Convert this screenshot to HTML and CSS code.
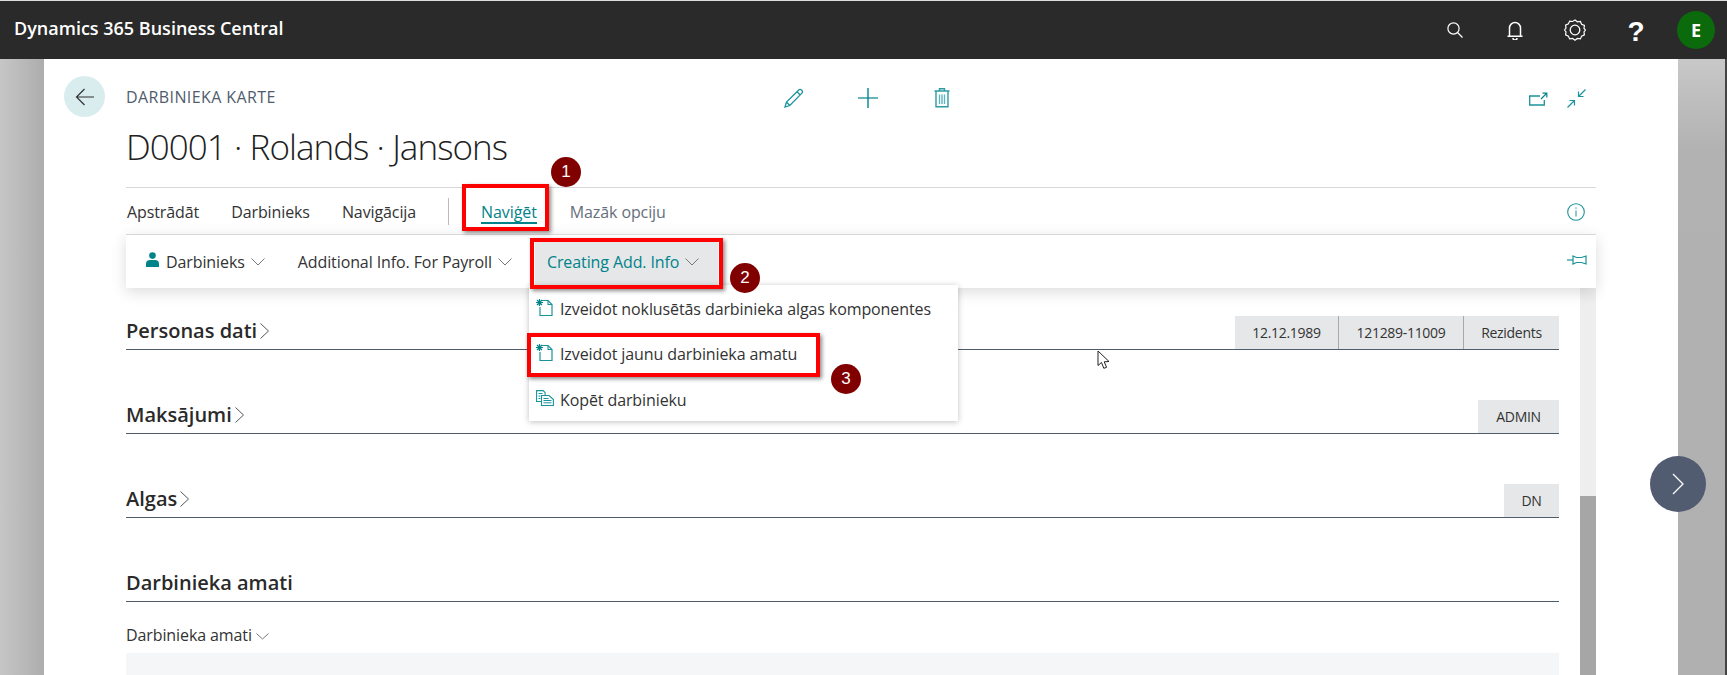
FILE: index.html
```html
<!DOCTYPE html>
<html lang="lv">
<head>
<meta charset="utf-8">
<title>Darbinieka karte</title>
<link rel="stylesheet" href="styles.css">
</head>
<body>
<div class="app">
  <header class="topbar">
    <div class="brand">Dynamics 365 Business Central</div>
    <div class="top-icons">
      <svg class="ti ti-search" viewBox="0 0 16 16" width="16" height="16"><circle cx="6.500" cy="6.500" r="5.600" fill="none" stroke="#fff" stroke-width="1.200"/><path d="M10.500 10.500l5 5" stroke="#fff" stroke-width="1.200"/></svg>
      <svg class="ti ti-bell" viewBox="0 0 16 19" width="16" height="19"><path d="M2.500 14.500V7a5.500 5.500 0 0 1 11 0v7.500M.5 15.200h15M6 17a2 2 0 0 0 4 0" fill="none" stroke="#fff" stroke-width="1.500"/></svg>
      <svg class="ti ti-gear" viewBox="0 0 22 22" width="22" height="22"><path d="M11 1l2.400 1.800 3-.4 1.200 2.800 2.800 1.200-.4 3L21.500 11l-1.500 1.900.4 3-2.800 1.200-1.200 2.800-3-.4L11 21.200l-2.400-1.700-3 .4-1.200-2.800-2.800-1.200.4-3L.5 11l1.500-1.900-.4-3 2.800-1.200 1.200-2.800 3 .4z" fill="none" stroke="#fff" stroke-width="1.200"/><circle cx="11" cy="11" r="4.800" fill="none" stroke="#fff" stroke-width="1.300"/></svg>
      <span class="ti ti-help">?</span>
      <span class="avatar">E</span>
    </div>
  </header>

  <div class="stage">
    <div class="gutter-left"></div>
    <main class="page">
      <div class="page-head">
        <button class="back" aria-label="Atpakaļ">
          <svg viewBox="0 0 20 18" width="20" height="18"><path d="M19 9H1.500M9.500 1L1.500 9l8 8" fill="none" stroke="#333" stroke-width="1.200"/></svg>
        </button>
        <div class="head-text">
          <div class="caption">DARBINIEKA KARTE</div>
          <h1 class="title">D0001 · Rolands · Jansons</h1>
        </div>
        <div class="tools">
          <svg viewBox="0 0 20 20" width="20" height="20"><path d="M1 19l1.500-5L14.500 2.200a2 2 0 0 1 3.200 3.200L5.800 17.500zM2.500 14l3.300 3.500M13 3.700l3.300 3.300" fill="none" stroke="#1b939a" stroke-width="1.300"/></svg>
          <svg viewBox="0 0 20 20" width="20" height="20"><path d="M10 0v20" stroke="#4aabb0" stroke-width="2"/><path d="M0 10h20" stroke="#00838a" stroke-width="1.200"/></svg>
          <svg class="tool-trash" viewBox="0 0 16 20" width="16" height="20"><path d="M.5 3h15M5.500 3V.8h5V3M2 3v15.800h12V3" fill="none" stroke="#2f9aa0" stroke-width="1.400"/><path d="M5.500 6.500v9.500M8 6.500v9.500M10.500 6.500v9.500" stroke="#5fb5b9" stroke-width="1.400"/></svg>
        </div>
        <div class="tools-right">
          <svg viewBox="0 0 19 14" width="19" height="14"><path d="M11 4H.7v9h14.600V8" fill="none" stroke="#1b939a" stroke-width="1.300"/><path d="M12 7l5-5M13.500 1.200h4.300v4.300" fill="none" stroke="#00838a" stroke-width="1.200"/></svg>
          <svg viewBox="0 0 19 19" width="19" height="19"><path d="M18.500.5l-7 7M11.500 2.500v5h5M.5 18.500l7-7M2.500 11.500h5v5" fill="none" stroke="#1b939a" stroke-width="1.200"/></svg>
        </div>
      </div>

      <nav class="tabs">
        <a class="tab">Apstrādāt</a>
        <a class="tab">Darbinieks</a>
        <a class="tab">Navigācija</a>
        <span class="tab-sep"></span>
        <a class="tab tab-active">Naviģēt</a>
        <a class="tab tab-more">Mazāk opciju</a>
        <svg class="info" viewBox="0 0 18 18" width="18" height="18"><circle cx="9" cy="9" r="8.300" fill="none" stroke="#1b939a" stroke-width="1.100"/><path d="M9 7.500v6M9 4.500v1.300" stroke="#1b939a" stroke-width="1"/></svg>
      </nav>

      <div class="actionbar">
        <div class="action action-first">
          <svg class="person" viewBox="0 0 13 15" width="13" height="15"><circle cx="6.500" cy="3.600" r="3.300" fill="#00838a"/><path d="M0 15v-3.500C0 9 2 8 4 8h5c2 0 4 1 4 3.500V15z" fill="#00838a"/></svg>
          <span>Darbinieks</span>
          <svg class="chev" viewBox="0 0 14 8" width="14" height="8"><path d="M.5.500L7 7l6.500-6.500" fill="none" stroke="#777" stroke-width="1"/></svg>
        </div>
        <div class="action action-second">
          <span>Additional Info. For Payroll</span>
          <svg class="chev" viewBox="0 0 14 8" width="14" height="8"><path d="M.5.500L7 7l6.500-6.500" fill="none" stroke="#777" stroke-width="1"/></svg>
        </div>
        <div class="action action-open">
          <span>Creating Add. Info</span>
          <svg class="chev" viewBox="0 0 14 8" width="14" height="8"><path d="M.5.500L7 7l6.500-6.500" fill="none" stroke="#777" stroke-width="1"/></svg>
        </div>
        <svg class="pin" viewBox="0 0 20 12" width="20" height="12"><path d="M0 6h6" stroke="#1b939a" stroke-width="1.200"/><path d="M6 2l3.500 1.500h5L19 2v8l-4.500-1.500h-5L6 10z" fill="none" stroke="#1b939a" stroke-width="1.200"/></svg>
      </div>

      <div class="scroll-area">
        <div class="sections">
          <section class="section">
            <h2 class="sec-title">Personas dati<svg class="sec-chev" viewBox="0 0 9 16" width="9" height="16"><path d="M.5.500L8.500 8l-8 7.500" fill="none" stroke="#555" stroke-width="1"/></svg></h2>
            <div class="chips"><span class="chip chip-date">12.12.1989</span><span class="chip chip-id">121289-11009</span><span class="chip chip-res">Rezidents</span></div>
          </section>
          <section class="section">
            <h2 class="sec-title">Maksājumi<svg class="sec-chev" viewBox="0 0 9 16" width="9" height="16"><path d="M.5.500L8.500 8l-8 7.500" fill="none" stroke="#555" stroke-width="1"/></svg></h2>
            <div class="chips"><span class="chip chip-admin">ADMIN</span></div>
          </section>
          <section class="section">
            <h2 class="sec-title">Algas<svg class="sec-chev" viewBox="0 0 9 16" width="9" height="16"><path d="M.5.500L8.500 8l-8 7.500" fill="none" stroke="#555" stroke-width="1"/></svg></h2>
            <div class="chips"><span class="chip chip-dn">DN</span></div>
          </section>
          <section class="section">
            <h2 class="sec-title">Darbinieka amati</h2>
          </section>
          <div class="part-label">Darbinieka amati<svg class="part-chev" viewBox="0 0 13 7" width="13" height="7"><path d="M.5.500l6 5.500 6-5.500" fill="none" stroke="#777" stroke-width="1"/></svg></div>
          <div class="table-head"></div>
        </div>
        <div class="scrollbar"><div class="sb-track"></div><div class="sb-thumb"></div></div>
      </div>
    </main>
    <div class="gutter-right"></div>
    <div class="edge"></div>
  </div>

  <div class="menu">
    <div class="menu-item">
      <svg class="mi" viewBox="0 0 17 17" width="17" height="17"><path d="M6 1.500h6l4 4v11H4V8" fill="none" stroke="#1b939a" stroke-width="1.200"/><path d="M12 1.500v4h4" fill="none" stroke="#1b939a" stroke-width="1.100"/><path d="M3.500 0v7M0 3.500h7M1 1l5 5M6 1L1 6" stroke="#00838a" stroke-width="1.200"/></svg>
      <span>Izveidot noklusētās darbinieka algas komponentes</span>
    </div>
    <div class="menu-item">
      <svg class="mi" viewBox="0 0 17 17" width="17" height="17"><path d="M6 1.500h6l4 4v11H4V8" fill="none" stroke="#1b939a" stroke-width="1.200"/><path d="M12 1.500v4h4" fill="none" stroke="#1b939a" stroke-width="1.100"/><path d="M3.500 0v7M0 3.500h7M1 1l5 5M6 1L1 6" stroke="#00838a" stroke-width="1.200"/></svg>
      <span>Izveidot jaunu darbinieka amatu</span>
    </div>
    <div class="menu-item">
      <svg class="mi mi-copy" viewBox="0 0 18 16" width="18" height="16"><path d="M5 11.500H.6V.6h6.500l2 2V5" fill="none" stroke="#1b939a" stroke-width="1.100"/><path d="M5.500 5.500h7.500l4.400 4v6H5.500z" fill="none" stroke="#1b939a" stroke-width="1.100"/><path d="M2.500 3.500h4M2.500 6h2M2.500 8.500h2M7.500 8.500h5M7.500 10.500h8M7.500 12.800h8" stroke="#1b939a" stroke-width="1"/></svg>
      <span>Kopēt darbinieku</span>
    </div>
  </div>

  <div class="mark mark-1"></div>
  <div class="mark mark-2"></div>
  <div class="mark mark-3"></div>
  <div class="num num-1">1</div>
  <div class="num num-2">2</div>
  <div class="num num-3">3</div>

  <button class="next" aria-label="Nākamais">
    <svg viewBox="0 0 12 22" width="12" height="22"><path d="M1 1l10 10L1 21" fill="none" stroke="#fff" stroke-width="1.300"/></svg>
  </button>
  <svg class="cursor" viewBox="0 0 14 20" width="14" height="20"><path d="M1 1v14.500l3.500-3 2.300 5.800 2.800-1-2.400-5.500 4.800-.3z" fill="#fff" stroke="#222" stroke-width="1"/></svg>
</div>
</body>
</html>
```
FILE: styles.css
```css
* { box-sizing: border-box; }
html, body { margin: 0; padding: 0; height: 100%; }
body { overflow: hidden; background: #fff; font-family: "Open Sans", "Noto Sans", "Liberation Sans", sans-serif; color: #333; }

.app { position: relative; width: 1727px; height: 675px; display: flex; flex-direction: column; overflow: hidden; }

.topbar { height: 59px; flex: none; background: #2a2a2a; border-top: 1px solid #dcdcdc; display: flex; align-items: center; justify-content: space-between; }
.brand { margin-left: 14px; margin-top: -4px; color: #fff; font-size: 18px; font-weight: 600; white-space: nowrap; }
.top-icons { display: flex; align-items: center; height: 100%; }
.ti { display: block; flex: none; }
.ti-search { margin-right: 44px; }
.ti-bell { margin-right: 41px; }
.ti-gear { margin-right: 41px; }
.ti-help { width: 18px; margin-right: 32px; margin-top: 3px; color: #fff; font-family: "Liberation Sans", sans-serif; font-weight: 700; font-size: 28px; line-height: 28px; text-align: center; }
.avatar { width: 38px; height: 38px; margin-right: 12px; border-radius: 50%; background: #0b6a0b; color: #fff; display: flex; align-items: center; justify-content: center; font-size: 18px; font-weight: 700; }

.stage { flex: 1; display: flex; min-height: 0; }
.gutter-left { width: 44px; flex: none; background: linear-gradient(90deg, #c6c6c6, #adadad); }
.gutter-right { width: 47px; flex: none; background: linear-gradient(180deg, #c8c8c8, #b2b2b2 90px, #b0b0b0); }
.edge { width: 2px; flex: none; background: #444; }
.page { flex: 1; min-width: 0; background: #fff; display: flex; flex-direction: column; }

.page-head { position: relative; height: 128px; flex: none; padding: 17px 0 0 20px; display: flex; align-items: flex-start; }
.back { width: 41px; height: 41px; padding: 0; border: 0; border-radius: 50%; background: #d9edef; display: flex; align-items: center; justify-content: center; flex: none; }
.head-text { margin-left: 21px; }
.caption { height: 41px; line-height: 43px; font-size: 16px; color: #505c6d; white-space: nowrap; letter-spacing: 0.4px; }
.title { margin: 8px 0 0; font-size: 35px; font-weight: 300; line-height: 44px; color: #212121; white-space: nowrap; letter-spacing: -0.95px; }
.tools { position: absolute; left: 740px; top: 29px; display: flex; gap: 54px; align-items: center; }
.tool-trash { margin-left: 2px; }
.tools-right { position: absolute; left: 1485px; top: 30px; display: flex; gap: 19px; align-items: center; }

.tabs { flex: none; height: 47px; margin-left: 82px; width: 1470px; border-top: 1px solid #d8d8d8; display: flex; align-items: center; font-size: 16px; line-height: 22px; color: #333; position: relative; padding-top: 1px; }
.tab { white-space: nowrap; letter-spacing: -0.1px; margin-left: 1px; margin-right: 31px; }
.tab-sep { width: 1px; height: 27px; background: #bbb; margin: 0 31px 0 1px; }
.tab-active { color: #00838a; position: relative; margin-right: 32px; }
.tab-active::after { content: ""; position: absolute; left: 0; right: 0; bottom: -1px; height: 2px; background: #00838a; }
.tab-more { color: #666f7c; margin-right: 0; }
.info { margin-left: auto; margin-right: 11px; }

.actionbar { position: relative; z-index: 2; flex: none; height: 54px; margin-left: 82px; width: 1470px; background: #fff; border-top: 1px solid #d8d8d8; box-shadow: 0 4px 14px rgba(0,0,0,.14); display: flex; align-items: center; font-size: 16px; color: #333; }
.action { display: flex; align-items: center; white-space: nowrap; letter-spacing: -0.1px; }
.action-first { margin-left: 20px; }
.person { margin-right: 7px; margin-top: -5px; }
.chev { margin-left: 6px; }
.action-second { margin-left: 33px; }
.action-open { margin-left: 23px; height: 46px; padding: 0 19px 0 12px; background: #e5e7e9; color: #00838a; }
.pin { margin-left: auto; margin-right: 9px; margin-top: -3px; }

.scroll-area { flex: 1; min-height: 0; display: flex; margin-left: 82px; overflow: hidden; }
.sections { width: 1433px; flex: none; padding-top: 28px; }
.section { height: 34px; margin-bottom: 50px; border-bottom: 1px solid #505c6d; display: flex; justify-content: space-between; align-items: flex-end; }
.sec-title { margin: 0 0 5px; font-size: 20px; font-weight: 600; color: #2a2a2a; line-height: 26px; white-space: nowrap; display: flex; align-items: center; }
.sec-chev { margin-left: 3px; }
.chips { display: flex; }
.chip { height: 33px; line-height: 33px; background: #e5e7e9; color: #333; font-size: 14px; text-align: center; border-left: 1px solid #a9a9a9; letter-spacing: -0.3px; }
.chip:first-child { border-left: 0; }
.chip-date { width: 103px; }
.chip-id { width: 125px; }
.chip-res { width: 96px; }
.chip-admin { width: 81px; }
.chip-dn { width: 55px; }
.part-label { margin-top: -28px; height: 22px; line-height: 22px; font-size: 16px; color: #333; white-space: nowrap; letter-spacing: -0.1px; display: flex; align-items: center; }
.part-chev { margin-left: 4px; margin-top: 2px; }
.table-head { margin-top: 7px; height: 40px; background: #f5f6f7; }
.scrollbar { margin-left: 21px; width: 16px; flex: none; display: flex; flex-direction: column; }
.sb-track { height: 208px; background: #eeeeee; flex: none; }
.sb-thumb { flex: 1; background: #a6a6a6; }

.menu { position: absolute; z-index: 3; left: 529px; top: 285px; width: 429px; height: 136px; background: #fff; box-shadow: 0 1px 6px rgba(0,0,0,.25); display: flex; flex-direction: column; padding-top: 1px; }
.menu-item { height: 45.500px; flex: none; display: flex; align-items: center; font-size: 16px; color: #333; white-space: nowrap; letter-spacing: -0.1px; }
.mi { margin-left: 7px; margin-right: 7px; margin-top: -3px; flex: none; }
.mi-copy { margin-right: 6px; }

.mark { position: absolute; z-index: 4; border: 4px solid #f00; box-shadow: 2px 2px 4px rgba(0,0,0,.45); }
.mark-1 { left: 462px; top: 184px; width: 87px; height: 47px; }
.mark-2 { left: 530px; top: 238px; width: 193px; height: 51px; }
.mark-3 { left: 527px; top: 333px; width: 293px; height: 44px; }

.num { position: absolute; z-index: 5; width: 30px; height: 30px; border-radius: 50%; background: #800000; color: #fff; font-family: "Liberation Sans", sans-serif; font-size: 17px; line-height: 30px; text-align: center; }
.num-1 { left: 551px; top: 157px; }
.num-2 { left: 730px; top: 263px; }
.num-3 { left: 831px; top: 364px; }

.next { position: absolute; z-index: 5; left: 1650px; top: 456px; width: 56px; height: 56px; padding: 0; border: 0; border-radius: 50%; background: #515c70; display: flex; align-items: center; justify-content: center; }
.cursor { position: absolute; z-index: 5; left: 1097px; top: 350px; }
```
